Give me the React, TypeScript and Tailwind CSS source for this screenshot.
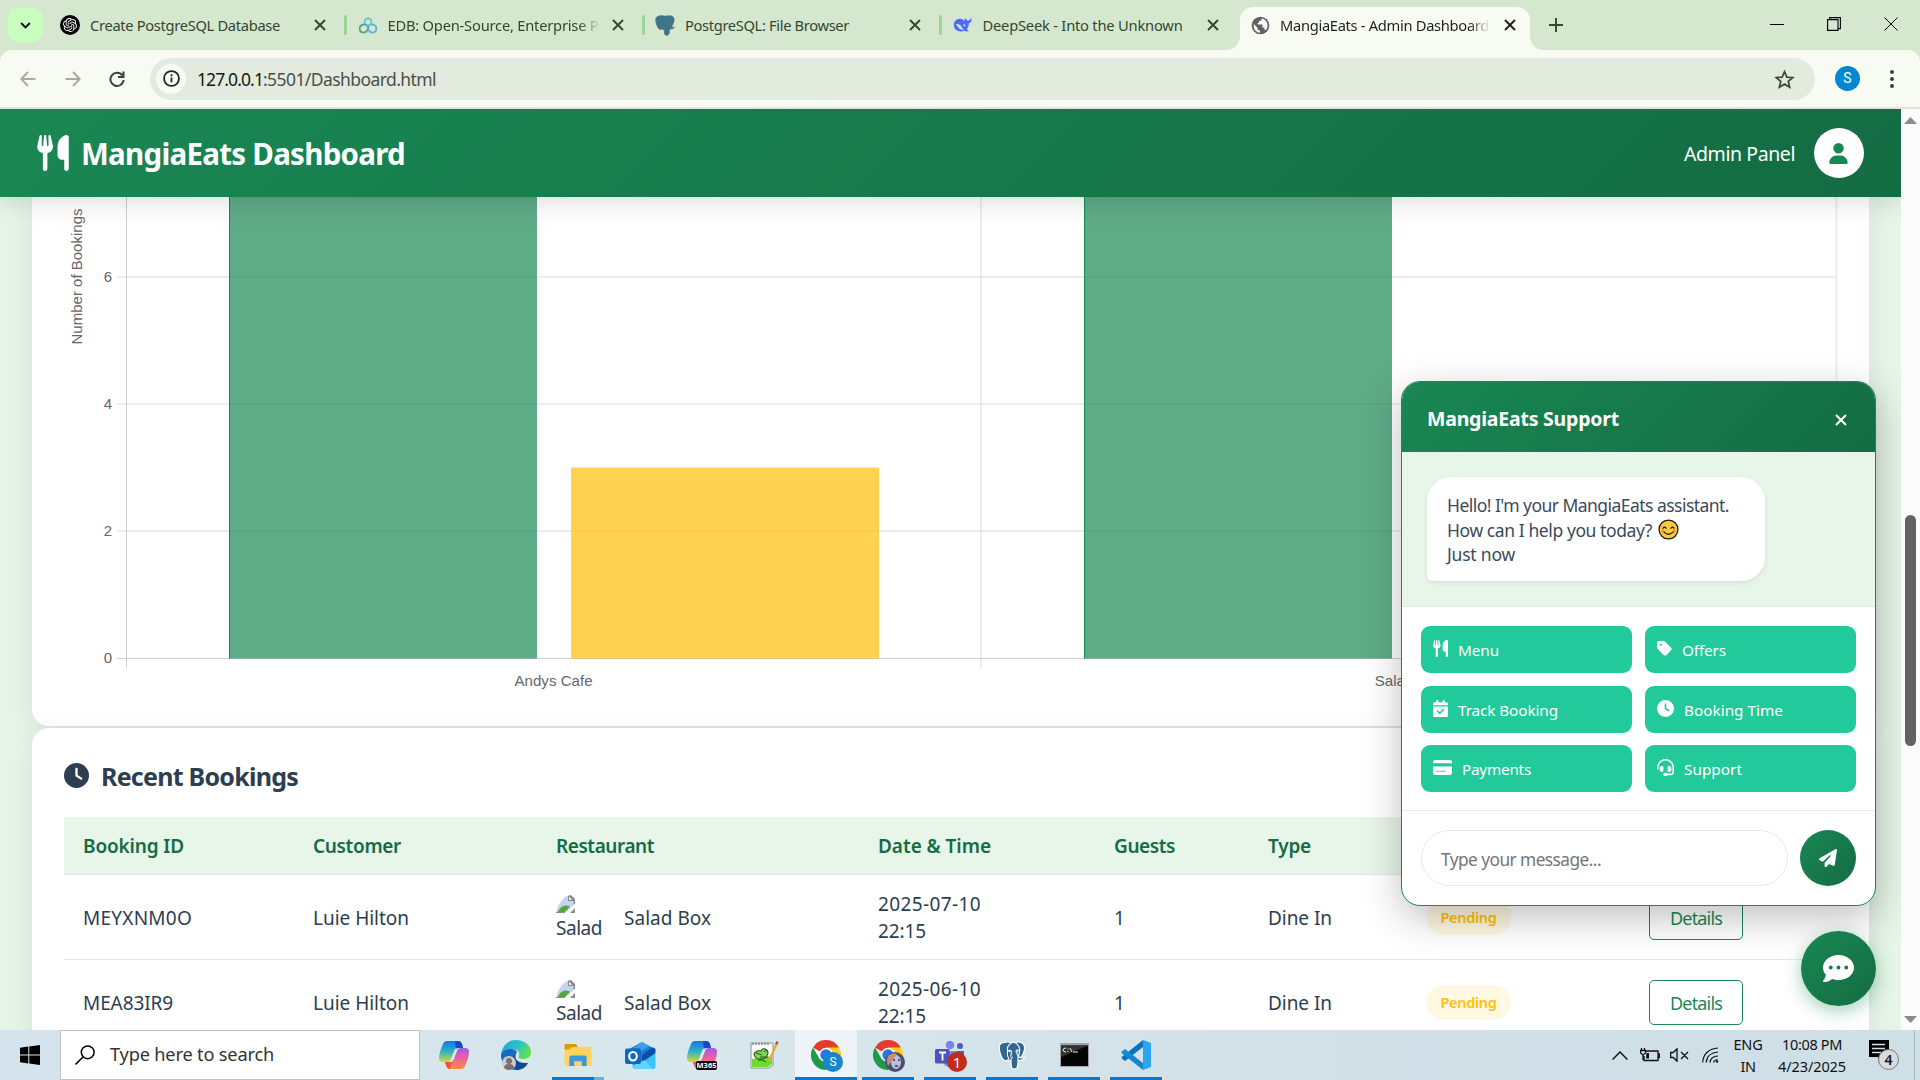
import { useLayoutEffect, useRef, useState, type ReactNode } from "react";
import {
  FaUtensils,
  FaUser,
  FaClock,
  FaTag,
  FaCalendarCheck,
  FaCreditCard,
  FaHeadset,
  FaPaperPlane,
  FaCommentDots,
} from "react-icons/fa6";
import { SiOpenai } from "react-icons/si";

/** Single-line text whose tracking is adjusted so that it spans `w` pixels. */
function Fit({ w, className = "", children }: { w: number; className?: string; children: string }) {
  const ref = useRef<HTMLSpanElement>(null);
  const [spacing, setSpacing] = useState(0);
  useLayoutEffect(() => {
    const natural = ref.current!.getBoundingClientRect().width;
    setSpacing((w - natural) / Math.max(1, children.length));
  }, [w, children]);
  return (
    <span
      ref={ref}
      className={"inline-block justify-self-start whitespace-nowrap " + className}
      style={{ letterSpacing: spacing + "px" }}
    >
      {children}
    </span>
  );
}

/* ---------- browser chrome ---------- */

function Cross({ className = "" }: { className?: string }) {
  return (
    <svg viewBox="0 0 12 12" className={"h-3 w-3 shrink-0 " + className} fill="none" stroke="currentColor" strokeWidth="1.9">
      <path d="M1 1l10 10M11 1L1 11" />
    </svg>
  );
}

function EdbIcon() {
  return (
    <svg viewBox="0 0 20 18" className="h-[17px] w-5" fill="none" strokeWidth="1.8">
      <circle cx="10" cy="5" r="3.6" stroke="#6cc5c5" />
      <path d="M8 8.6C6 7.2 1.2 8 1.2 12.2c0 5.400 6.600 5.400 8.400 1.200l1.400-3.400" stroke="#4f9f98" />
      <path d="M12 8.600c2-1.400 6.800-.6 6.800 3.600 0 5.400-6.600 5.400-8.400 1.200L8.600 9" stroke="#5aaee0" />
    </svg>
  );
}

function Elephant({ className = "", fill = "#336791", outline = "#ffffff" }: { className?: string; fill?: string; outline?: string }) {
  return (
    <svg viewBox="0 0 30 32" className={className}>
      <path
        d="M7 1.500c3-1 5-.5 7 .5 1.500-.7 3-.7 4.500-.3C23 0 28 1.500 28.800 6c.4 4-2 9.500-4.300 12.500 1.600.5 3.300.2 4.500 0-.8 2.200-4 3.300-7.300 2.800-.2 3 .1 6-1.200 8.200-1.200 1.800-4.500 1.800-5.700 0-1-2-.8-5-1-8-1.500.6-3 .5-4-.3l-2 .9C3.500 20.500.5 11 1 6c.3-3 3-4.300 6-4.500z"
        fill={fill}
        stroke={outline}
        strokeWidth="1.300"
      />
      <g fill="none" stroke={outline} strokeWidth="1.200" strokeLinecap="round">
        <path d="M14 2.500c-3.500 2-4.500 4.500-4 8 .3 3-.8 5 .8 7.500 1 1.500 1 2.500-1 3.200" />
        <path d="M10 11.500c1.500-1.500 3.800-1.500 4.300 0 .5 2-.5 4-.8 5.500" />
        <path d="M18.500 2c3.500 2 5 5.500 5 8.500 0 2.500-1.300 4-1 6.500.1.800.5 1.200 2 1.500M23 10.500c-1.500-1-3.500-.8-3.600.6 0 2 2.500 4 2.300 6.500l-.2 3.500" />
        <path d="M13.800 21c0-1.500.4-2.500 1.700-3" />
      </g>
      <circle cx="12.300" cy="11.500" r=".8" fill={outline} />
      <circle cx="21.200" cy="11.200" r=".8" fill={outline} />
    </svg>
  );
}

function WhaleIcon() {
  return (
    <svg viewBox="0 0 24 20" className="h-[18px] w-[21px]" fill="#4d6bfe">
      <path d="M1 10C1 5 4.500 2.500 8.500 2.500c2.500 0 3.500 1 4.500 2.500 1-.3 1.500-1.500 1.200-3.500 1.300.8 2.300 1.800 2.800 3 2 .2 3.500-.5 4.500-3 1.700 3 .5 5.500-2.500 6.500 0 3-1 5.500-2.500 7l2.500 2.200c-2 .8-4 .5-5-.3C7 19.500 1 16 1 10z" />
      <path d="M3.500 9c3-1 6 1 7.500 4.500.5 1 1.500 1.800 2.500 2-3 .8-5-.5-6.500-2-1.200-1.500-2-2.500-3.500-4.500zM12 9.500c1-1 3 0 3 2-1 .5-2 0-3-2z" fill="#d5e7cf" />
    </svg>
  );
}

function GlobeIcon() {
  return (
    <svg viewBox="0 0 20 20" className="h-[19px] w-[19px]">
      <circle cx="10" cy="10" r="9.300" fill="#5f6368" />
      <path d="M3 8.500l4 4v2l2.500 1v2.200C5 17.200 2 13.500 3 8.500zM12 2.500c-1 .2-1 1.500-1.200 2.500H8.500v2H7v2h5v3h2v2.500h2c3-4 1.500-10-4-12z" fill="#f8fbf2" />
    </svg>
  );
}

const tabs: { title: string; w: number; clip: boolean; icon: ReactNode }[] = [
  {
    title: "Create PostgreSQL Database",
    w: 190,
    clip: false,
    icon: (
      <span className="flex h-5 w-5 items-center justify-center rounded-full bg-black">
        <SiOpenai color="#fff" size={14} />
      </span>
    ),
  },
  { title: "EDB: Open-Source, Enterprise P", w: 211, clip: true, icon: <EdbIcon /> },
  { title: "PostgreSQL: File Browser", w: 164, clip: false, icon: <Elephant className="h-[21px] w-5" fill="#35788a" outline="#5d6f7a" /> },
  { title: "DeepSeek - Into the Unknown", w: 200, clip: false, icon: <WhaleIcon /> },
];

function TabStrip() {
  return (
    <div className="flex h-[50px] shrink-0 bg-[#d5e7cf] pl-2 text-[#32472f]">
      <div className="mt-2 flex h-[34px] w-[35px] shrink-0 items-center justify-center rounded-[10px] bg-[#c8ffc0]">
        <svg viewBox="0 0 12 8" className="h-[7px] w-[11px]" fill="none" stroke="#111" strokeWidth="2.2">
          <path d="M1 1.200l5 5 5-5" />
        </svg>
      </div>
      <div className="flex w-[1197px] shrink-0 pl-[3px]">
        {tabs.map((t, i) => (
          <div key={t.title} className="flex h-[50px] w-[297.500px] shrink-0 items-center pl-[14px]">
            <div className="flex w-5 shrink-0 items-center justify-center">{t.icon}</div>
            <div
              className={
                "ml-[10px] w-[212px] shrink-0 overflow-hidden pt-px text-[14.700px] " +
                (t.clip ? "[mask-image:linear-gradient(to_right,black_90%,transparent)]" : "")
              }
            >
              <Fit w={t.w}>{t.title}</Fit>
            </div>
            <Cross className="ml-[12px]" />
            {i < 3 && <div className="ml-[18px] h-5 w-[3px] shrink-0 rounded bg-[#98d692]" />}
          </div>
        ))}
      </div>
      <div className="relative mt-[7px] flex h-[43px] w-[290px] shrink-0 items-center rounded-t-[13px] bg-[#f8fbf2] pb-[7px] pl-[11px] text-[#1b2419]">
        <svg viewBox="0 0 14 14" className="absolute -left-[14px] bottom-0 h-[14px] w-[14px]" fill="#f8fbf2">
          <path d="M14 0v14H0C8 14 14 8 14 0z" />
        </svg>
        <svg viewBox="0 0 14 14" className="absolute -right-[14px] bottom-0 h-[14px] w-[14px]" fill="#f8fbf2">
          <path d="M0 0v14h14C6 14 0 8 0 0z" />
        </svg>
        <GlobeIcon />
        <div className="ml-[10px] w-[210px] shrink-0 overflow-hidden pt-px text-[14.700px] [mask-image:linear-gradient(to_right,black_90%,transparent)]">
          <Fit w={209}>MangiaEats - Admin Dashboard</Fit>
        </div>
        <Cross className="ml-[14px]" />
      </div>
      <svg viewBox="0 0 14 14" className="ml-[19px] mt-[18px] h-[14px] w-[14px]" fill="none" stroke="#32472f" strokeWidth="1.9">
        <path d="M7 0v14M0 7h14" />
      </svg>
      <div className="ml-auto flex h-[50px] items-center gap-[43px] pb-[2px] pr-[22px] text-black">
        <div className="h-px w-[14px] bg-black" />
        <svg viewBox="0 0 14 14" className="h-[14px] w-[14px]" fill="none" stroke="#000" strokeWidth="1.100">
          <path d="M.6 2.600h10.400v10.800H.6zM2.600 2.600V.6h10.800v11h-2.400" />
        </svg>
        <svg viewBox="0 0 14 14" className="h-[14px] w-[14px]" fill="none" stroke="#000" strokeWidth="1">
          <path d="M.5.5l13 13M13.500.5l-13 13" />
        </svg>
      </div>
    </div>
  );
}

function Toolbar() {
  return (
    <div className="flex h-[59px] shrink-0 bg-[#d5e7cf]">
      <div className="flex h-full w-full items-center rounded-t-[12px] border-b-2 border-[#dfe5da] bg-[#f8fbf2] pl-[20px]">
        <svg viewBox="0 0 16 16" className="h-4 w-4" fill="none" stroke="#a6aca2" strokeWidth="1.900">
          <path d="M15.500 8H1.500M8 1L1.300 8 8 15" />
        </svg>
        <svg viewBox="0 0 16 16" className="ml-[29px] h-4 w-4" fill="none" stroke="#a6aca2" strokeWidth="1.900">
          <path d="M.5 8h14M8 1l6.700 7L8 15" />
        </svg>
        <svg viewBox="0 0 16 16" className="ml-[28px] h-4 w-4" fill="none" stroke="#32472f" strokeWidth="2">
          <path d="M13.400 4.500A6.600 6.600 0 1 0 14.600 9M14.500 .5v5.500H9" />
        </svg>
        <div className="ml-[25px] flex h-[42px] w-[1665px] shrink-0 items-center rounded-full bg-[#e3ebdf] pl-[6px] pr-[20px]">
          <div className="flex h-[30px] w-[30px] items-center justify-center rounded-full bg-[#f8fbf2]">
            <svg viewBox="0 0 18 18" className="h-[17px] w-[17px]" fill="none" stroke="#1f2a1d" strokeWidth="1.900">
              <circle cx="9" cy="9" r="7.900" />
              <path d="M9 8v5M9 4.600v1.900" />
            </svg>
          </div>
          <div className="ml-[11px] pt-px text-[17.500px] text-[#4a4f48]">
            <Fit w={66} className="text-[#16190f]">127.0.0.1</Fit>
            <Fit w={173}>:5501/Dashboard.html</Fit>
          </div>
          <svg viewBox="0 0 24 24" className="ml-auto mt-[2px] h-[21px] w-[21px]" fill="none" stroke="#3f4a3d" strokeWidth="2">
            <path d="M12 3l2.700 6.200 6.700.6-5.100 4.400 1.600 6.600-5.900-3.500-5.900 3.500 1.600-6.600-5.100-4.400 6.700-.6z" />
          </svg>
        </div>
        <div className="ml-[20px] flex h-[25px] w-[25px] items-center justify-center rounded-full bg-[#0288d1] font-[Roboto] text-[14px] text-white">S</div>
        <div className="ml-[30px] flex flex-col gap-[3px]">
          <i className="h-[4px] w-[4px] rounded-full bg-[#32472f]" />
          <i className="h-[4px] w-[4px] rounded-full bg-[#32472f]" />
          <i className="h-[4px] w-[4px] rounded-full bg-[#32472f]" />
        </div>
      </div>
    </div>
  );
}

/* ---------- dashboard ---------- */

function Header() {
  return (
    <header className="relative z-10 flex h-[88px] shrink-0 items-center bg-linear-135 from-[#198754] to-[#146c43] pl-[37px] pr-[37px] text-white shadow-[0_4px_25px_rgba(0,0,0,0.15)]">
      <FaUtensils className="h-[36px] w-[32px]" />
      <h1 className="ml-[12px] pt-[2px] text-[29.500px] font-bold">
        <Fit w={324}>MangiaEats Dashboard</Fit>
      </h1>
      <div className="ml-auto flex items-center gap-[19px] text-[19.500px]">
        <Fit w={111} className="pt-[2px]">Admin Panel</Fit>
        <div className="flex h-[50px] w-[50px] items-center justify-center rounded-full bg-white">
          <FaUser className="mr-px h-[21px] w-[19px] text-[#198754]" />
        </div>
      </div>
    </header>
  );
}

const ticks = [
  { v: "6", y: 80 },
  { v: "4", y: 207 },
  { v: "2", y: 334 },
  { v: "0", y: 461.500 },
];

function BookingsChart() {
  return (
    <svg viewBox="0 0 1837 529" className="h-[529px] w-[1837px]" fontFamily="Liberation Sans, Arial, sans-serif" fontSize="15" fill="#666">
      <g stroke="#000" strokeOpacity="0.07" strokeWidth="2">
        {ticks.slice(0, 3).map((t) => (
          <path key={t.v} d={`M85 ${t.y}H1804`} />
        ))}
        <path d="M949 0V471M1804.500 0V471" />
      </g>
      <g stroke="#cfcfcf" strokeWidth="1">
        <path d="M94.500 0V471M85 461.500H1804" />
      </g>
      <rect x="197" y="-2" width="308" height="463.500" fill="#198754" fillOpacity="0.7" />
      <path d="M197.500 0V461.500" stroke="#198754" />
      <rect x="539" y="270.500" width="308" height="191" fill="#ffc107" fillOpacity="0.7" />
      <rect x="1052" y="-2" width="308" height="463.500" fill="#198754" fillOpacity="0.7" />
      <path d="M1052.500 0V461.500" stroke="#198754" />
      {ticks.map((t) => (
        <text key={t.v} x="80" y={Math.floor(t.y) + 5} textAnchor="end">
          {t.v}
        </text>
      ))}
      <text x="521.500" y="489" textAnchor="middle" textLength="78">Andys Cafe</text>
      <text x="1377" y="489" textAnchor="middle">Salad Box</text>
      <text transform="translate(49.500 79.500) rotate(-90)" textAnchor="middle" textLength="136">Number of Bookings</text>
    </svg>
  );
}

function BrokenImage() {
  return (
    <div className="h-[50px] w-[47px] overflow-hidden pt-[3px] leading-[30px]">
      <svg viewBox="0 0 20 18" className="block h-[18px] w-5">
        <path d="M0 18C2 8 8 1 14 0l5 4v5L8 18z" fill="#c3d3f3" />
        <path d="M12 1l3-1 4 4v5h-1.500V6H12z" fill="#8b8b8b" />
        <path d="M13 1.800v3h3z" fill="#fff" />
        <path d="M2 17c2-6 8-8 12-5l-5 5z" fill="#55a834" />
        <path d="M0 17h9v1H0zM14 18l5-5v5z" fill="#8b8b8b" />
      </svg>
      <Fit w={46} className="-mt-[2px]">Salad</Fit>
    </div>
  );
}

const GRID = "grid grid-cols-[230px_243px_322px_236px_154px_158px_223px_207px] items-center pl-[19px] w-[1773px] border-b border-[#e3e6e8]";

const bookings = [
  { id: "MEYXNM0O", idw: 109, date: "2025-07-10" },
  { id: "MEA83IR9", idw: 90, date: "2025-06-10" },
];

function RecentBookings() {
  return (
    <section className="h-[420px] shrink-0 rounded-t-[17px] bg-white px-8 pt-[31px] shadow-[0_8px_30px_rgba(0,0,0,0.08)]">
      <h2 className="flex h-[36px] items-center text-[25px] font-bold text-[#2c3e50]">
        <FaClock className="mb-[4px] h-[25px] w-[25px]" />
        <Fit w={197} className="ml-[12px]">Recent Bookings</Fit>
      </h2>
      <div className="mt-[22px] text-[19px] text-[#2c3e50]">
        <div className={GRID + " h-[58px] bg-[#e8f5e9] pt-[2px] font-semibold text-[#146c43]"}>
          <Fit w={101}>Booking ID</Fit>
          <Fit w={88}>Customer</Fit>
          <Fit w={98}>Restaurant</Fit>
          <Fit w={113}>Date & Time</Fit>
          <Fit w={61}>Guests</Fit>
          <Fit w={43}>Type</Fit>
          <Fit w={60}>Status</Fit>
          <Fit w={70}>Actions</Fit>
        </div>
        {bookings.map((b) => (
          <div key={b.id} className={GRID + " h-[85px]"}>
            <div className="pt-[2px]"><Fit w={b.idw}>{b.id}</Fit></div>
            <div className="pt-[2px]"><Fit w={96}>Luie Hilton</Fit></div>
            <div className="flex items-center">
              <BrokenImage />
              <div className="ml-[21px] pt-[2px]"><Fit w={87}>Salad Box</Fit></div>
            </div>
            <div className="pt-px leading-[27px]">
              <div><Fit w={103}>{b.date}</Fit></div>
              <div><Fit w={48}>22:15</Fit></div>
            </div>
            <div className="pt-[2px]">1</div>
            <div className="pt-[2px]"><Fit w={64}>Dine In</Fit></div>
            <div>
              <div className="flex h-[35px] w-[85px] items-center justify-center rounded-full bg-[#fff8e2] text-[14.500px] font-semibold text-[#ffc107]">
                <Fit w={56} className="pt-px">Pending</Fit>
              </div>
            </div>
            <div>
              <div className="flex h-[45px] w-[94px] items-center justify-center rounded-[5px] border border-[#198754] pt-[2px] text-[18px] text-[#198754]">
                <Fit w={52}>Details</Fit>
              </div>
            </div>
          </div>
        ))}
      </div>
    </section>
  );
}

/* ---------- chat ---------- */

function Smile() {
  return (
    <svg viewBox="0 0 20 20" className="ml-[6px] h-[21px] w-[21px]">
      <circle cx="10" cy="10" r="9" fill="#ffc83d" stroke="#1a1a1a" strokeWidth="1.200" />
      <circle cx="4.600" cy="11.500" r="1.500" fill="#ff8257" />
      <circle cx="15.400" cy="11.500" r="1.500" fill="#ff8257" />
      <path d="M4.800 8.800q1.400-2 2.900 0M12.300 8.800q1.400-2 2.900 0M5.800 12.500q4.200 4 8.400 0" fill="none" stroke="#1a1a1a" strokeWidth="1.200" strokeLinecap="round" />
    </svg>
  );
}

const actions = [
  { label: "Menu", w: 41, icon: <FaUtensils className="h-[17px] w-[15px]" /> },
  { label: "Offers", w: 44, icon: <FaTag className="h-[17px] w-[15px]" /> },
  { label: "Track Booking", w: 100, icon: <FaCalendarCheck className="h-[17px] w-[15px]" /> },
  { label: "Booking Time", w: 99, icon: <FaClock className="h-[17px] w-[17px]" /> },
  { label: "Payments", w: 69, icon: <FaCreditCard className="h-[17px] w-[19px]" /> },
  { label: "Support", w: 58, icon: <FaHeadset className="h-[17px] w-[17px]" /> },
];

function Chat() {
  return (
    <div className="absolute left-[1401px] top-[272px] z-20 flex h-[525px] w-[475px] flex-col overflow-hidden rounded-[19px] border border-[#198754] bg-white shadow-[0_12px_38px_rgba(0,0,0,0.25)]">
      <div className="flex h-[70px] shrink-0 items-center justify-between bg-linear-135 from-[#198754] to-[#146c43] pl-[25px] pr-[28px] text-[19.500px] font-bold text-white">
        <Fit w={192} className="pt-[3px]">MangiaEats Support</Fit>
        <svg viewBox="0 0 12 12" className="mt-[6px] h-3 w-3" fill="none" stroke="#fff" strokeWidth="2">
          <path d="M1 1l10 10M11 1L1 11" />
        </svg>
      </div>
      <div className="h-[155px] shrink-0 border-b border-[#e3e8e6] bg-[#e8f5e9] pl-[25px] pt-[25px]">
        <div className="h-[104px] w-[338px] rounded-[24px] rounded-bl-[6px] bg-white pl-[20px] pt-[16px] text-[17.500px] leading-[24.500px] text-[#3b4a5a] shadow-[0_2px_6px_rgba(0,0,0,0.08)]">
          <div><Fit w={282}>Hello! I'm your MangiaEats assistant.</Fit></div>
          <div className="flex items-center">
            <Fit w={205}>How can I help you today?</Fit>
            <Smile />
          </div>
          <div><Fit w={68}>Just now</Fit></div>
        </div>
      </div>
      <div className="grid h-[204px] shrink-0 grid-cols-[211px_211px] content-start gap-x-[13px] gap-y-[12.500px] border-b border-[#e6e8ea] pl-[19px] pt-[19px]">
        {actions.map((a) => (
          <div key={a.label} className="flex h-[47px] items-center rounded-[9px] bg-[#22c99a] pl-[12px] text-[15.300px] text-white">
            <span className="pb-[2px]">{a.icon}</span>
            <Fit w={a.w} className="ml-[10px] pt-[2px]">{a.label}</Fit>
          </div>
        ))}
      </div>
      <div className="flex flex-1 items-center gap-[12px] pb-px pl-[19px]">
        <div className="flex h-[56px] w-[367px] items-center rounded-full border border-[#e6e8ea] pl-[19px] pt-[4px] text-[17.300px] text-[#757575]">
          <Fit w={160}>Type your message...</Fit>
        </div>
        <div className="flex h-[56px] w-[56px] items-center justify-center rounded-full bg-linear-135 from-[#198754] to-[#146c43] text-white">
          <FaPaperPlane className="h-[18px] w-[18px]" />
        </div>
      </div>
    </div>
  );
}

function Page() {
  return (
    <div className="flex h-[921px] shrink-0">
      <div className="relative flex w-[1901px] shrink-0 flex-col overflow-hidden bg-[#e6f5e7]">
        <Header />
        <div className="flex flex-col gap-[2px] pl-8 pr-8">
          <section className="h-[529px] shrink-0 rounded-b-[17px] bg-white shadow-[0_8px_30px_rgba(0,0,0,0.08)]">
            <BookingsChart />
          </section>
          <RecentBookings />
        </div>
        <Chat />
        <div className="absolute left-[1801px] top-[822px] z-20 flex h-[75px] w-[75px] items-center justify-center rounded-full bg-linear-135 from-[#198754] to-[#146c43] text-white shadow-[0_5px_18px_rgba(25,135,84,0.4)]">
          <FaCommentDots className="h-[31px] w-[31px]" />
        </div>
      </div>
      <div className="flex w-[19px] shrink-0 flex-col items-center bg-[#fcfcfc] pb-[7px] pt-[8px]">
        <svg viewBox="0 0 13 7" className="h-[7px] w-[13px]" fill="#8a8a8a"><path d="M0 7L6.500 0 13 7z" /></svg>
        <div className="mt-[391px] h-[231px] w-[11px] rounded-full bg-[#636363]" />
        <svg viewBox="0 0 13 7" className="mt-auto h-[7px] w-[13px]" fill="#8a8a8a"><path d="M0 0h13L6.500 7z" /></svg>
      </div>
    </div>
  );
}

/* ---------- taskbar ---------- */

function Copilot() {
  return (
    <svg viewBox="0 0 30 28" className="h-[28px] w-[30px]">
      <defs>
        <linearGradient id="cpA" x1="0" y1="0" x2="0" y2="1">
          <stop offset="0" stopColor="#1b74e8" /><stop offset=".5" stopColor="#2bb3c0" /><stop offset="1" stopColor="#d8d83a" />
        </linearGradient>
        <linearGradient id="cpB" x1="0" y1="0" x2="0" y2="1">
          <stop offset="0" stopColor="#a558e8" /><stop offset=".5" stopColor="#f0609c" /><stop offset="1" stopColor="#f7913d" />
        </linearGradient>
      </defs>
      <path d="M8 0h11q3 0 4 3l1 4h-5q-3 0-4 3l-3 8q-1 3-4 3H4q-4 0-4-4Q0 12 4 3 5 0 8 0z" fill="url(#cpA)" />
      <path d="M22 28H11q-3 0-4-4l-1-3h5q3 0 4-3l3-8q1-3 4-3h4q4 0 4 4 0 5-4 14-1 3-4 3z" fill="url(#cpB)" />
      <path d="M16 0h3q3 0 4 3l1 4h-5q-1 0-2 .6z" fill="#1648c8" />
      <path d="M6 21h5q1 0 2-.5L11 28Q8 28 7 24z" fill="#f0553a" />
    </svg>
  );
}

function Edge() {
  return (
    <svg viewBox="0 0 30 30" className="h-[30px] w-[30px]">
      <defs>
        <linearGradient id="edA" x1="0" y1="0" x2="1" y2=".4">
          <stop offset="0" stopColor="#1f9de0" /><stop offset=".6" stopColor="#2cc3c8" /><stop offset="1" stopColor="#5fe04f" />
        </linearGradient>
      </defs>
      <path d="M0 15C1 6 7 0 15 0c9 0 15 6 15 12 0 5-4 7-7 7-4 0-6-1-5-3 1-4-2-7-7-7C6 9 1 12 0 15z" fill="url(#edA)" />
      <path d="M0 15C1 11 5 9 10 9c3 0 5 1 6 3-3 1-5 4-5 8 1 6 8 8 16 3-3 5-7 7-12 7C6 30 0 24 0 15z" fill="#1569c0" />
      <path d="M11 20c0-4 2-7 5-8-4 5-1 12 11 11-3 5-7 7-12 7-3-3-4-6-4-10z" fill="#124a91" />
      <circle cx="8" cy="23" r="7" fill="#cfccc8" />
      <circle cx="8" cy="21" r="3" fill="#77726e" />
      <path d="M3 28q0-4 5-4t5 4q-5 4-10 0z" fill="#77726e" />
    </svg>
  );
}

function Explorer() {
  return (
    <svg viewBox="0 0 28 24" className="h-[23px] w-[28px]">
      <path d="M0 0h12l2 3H8L5 6H0z" fill="#e09a00" />
      <path d="M0 6h5l3-3h20v20H0z" fill="#ffd35c" />
      <path d="M5 23V14q0-2 2-2h14q2 0 2 2v9h-5v-5h-8v5z" fill="#3c97dc" />
    </svg>
  );
}

function Outlook() {
  return (
    <svg viewBox="0 0 31 27" className="h-[27px] w-[31px]">
      <path d="M5 6.500L17 0l13 7v17q0 3-3 3H11q-3 0-3-3z" fill="#1a7fdc" />
      <path d="M17 0l7 4-9 6V6.500H8z" fill="#3f9fe8" />
      <path d="M17 13L27.500 5.300 30.500 7v4L17 20z" fill="#0c4fa6" />
      <path d="M30.500 11v13q0 3-3 3H10q-2 0-3-3h6z" fill="#3cc4f5" />
      <path d="M15 20l5-2 8 9H10q-2 0-3-3z" fill="#62d6fa" />
      <rect y="6.500" width="16" height="15.500" rx="2" fill="#0f68c2" />
      <ellipse cx="8" cy="14.200" rx="3.800" ry="4.200" fill="none" stroke="#fff" strokeWidth="2.200" />
    </svg>
  );
}

function NoteEditor() {
  return (
    <svg viewBox="0 0 29 28" className="h-[28px] w-[29px]">
      <path d="M1 2h22v22l-4 3H1z" fill="#fafafa" stroke="#777" strokeWidth=".8" />
      <path d="M3 2v2M6 2v2M9 2v2M12 2v2M15 2v2M18 2v2" stroke="#555" />
      <path d="M2 18l20-3v8l-4 3H2z" fill="#6edb2f" />
      <path d="M4 13q2-4 7-3 1-3 4-2t3 4q-1 5-6 6-7 1-8-5z" fill="#7cd858" stroke="#264f18" strokeWidth="1.100" />
      <path d="M6 12l6 2M8 19q4-1 8 2M14 11l3-2M10 16h8" stroke="#2d551e" strokeWidth="1" fill="none" />
      <path d="M19 20L26.500 3" stroke="#eaa937" strokeWidth="2.200" />
      <path d="M26.200 3.500l1.300-3" stroke="#c14b44" strokeWidth="2.400" />
    </svg>
  );
}

function Chrome() {
  return (
    <svg viewBox="0 0 30 30" className="h-[30px] w-[30px]">
      <path d="M15 15L2 7.500A15 15 0 0 1 28 7.500z" fill="#e33b2e" />
      <path d="M15 7.500h13A15 15 0 0 1 15 30l6.500-11.300z" fill="#fdd023" />
      <path d="M2 7.500A15 15 0 0 0 15 30l6.500-11.300L8.500 18.700z" fill="#1f9a4d" />
      <circle cx="15" cy="15" r="7.200" fill="#fff" />
      <circle cx="15" cy="15" r="5.700" fill="#2b72e4" />
    </svg>
  );
}

function Teams() {
  return (
    <svg viewBox="0 0 30 28" className="h-[28px] w-[30px]">
      <circle cx="15" cy="4" r="4.300" fill="#7b83eb" />
      <circle cx="25" cy="5" r="3" fill="#5059c9" />
      <path d="M21 10h8v8q-1 4-6 4h-2z" fill="#5059c9" />
      <path d="M8 10h14v10q-1 6-7 6t-7-6z" fill="#7b83eb" />
      <rect y="8" width="14.500" height="14.500" rx="1.500" fill="#4b53bc" />
      <path d="M4 11.500h7M7.500 11.500v8" stroke="#fff" strokeWidth="1.900" />
    </svg>
  );
}

function Terminal() {
  return (
    <svg viewBox="0 0 29 24" className="h-[24px] w-[29px]">
      <rect width="29" height="24" fill="#a3a3a3" />
      <rect x="1" y="2.500" width="27" height="20.500" fill="#050505" />
      <path d="M1 2.500h27L1 14z" fill="#333" />
      <path d="M6 5q-3 0-3 2t3 2M8 5.500v1M8 8v1M10 5l2 4M13 9h5" stroke="#fff" strokeWidth=".9" fill="none" />
    </svg>
  );
}

function VsCode() {
  return (
    <svg viewBox="0 0 30 30" className="h-[30px] w-[30px]">
      <path d="M22 7L4 21l-3-2.300q-1-1 0-2L22 0z" fill="#0b73ba" />
      <path d="M22 23L4 9l-3 2.300q-1 1 0 2L22 30z" fill="#1588d0" />
      <path d="M22 0l8 3v24l-8 3z" fill="#2aa5ee" />
    </svg>
  );
}

function BadgedChrome({ children }: { children: ReactNode }) {
  return (
    <div className="relative">
      <Chrome />
      {children}
    </div>
  );
}

const apps: { name: string; state: "none" | "open" | "multi" | "active"; icon: ReactNode }[] = [
  { name: "copilot", state: "none", icon: <Copilot /> },
  { name: "edge", state: "none", icon: <Edge /> },
  { name: "explorer", state: "multi", icon: <Explorer /> },
  { name: "outlook", state: "none", icon: <Outlook /> },
  {
    name: "m365",
    state: "none",
    icon: (
      <div className="relative">
        <Copilot />
        <span className="absolute -bottom-px right-0 flex h-[9px] w-[21px] items-center justify-center rounded-[2px] bg-black text-[7.500px] font-bold leading-none text-white">M365</span>
      </div>
    ),
  },
  { name: "notes", state: "none", icon: <NoteEditor /> },
  {
    name: "chrome",
    state: "active",
    icon: (
      <BadgedChrome>
        <span className="absolute -bottom-[2px] -right-[2px] flex h-5 w-5 items-center justify-center rounded-full bg-[#1787cd] font-[Roboto] text-[12px] text-white">S</span>
      </BadgedChrome>
    ),
  },
  {
    name: "chrome-2",
    state: "open",
    icon: (
      <BadgedChrome>
        <svg viewBox="0 0 20 20" className="absolute -bottom-[2px] -right-[2px] h-5 w-5">
          <circle cx="10" cy="10" r="10" fill="#4a506e" />
          <ellipse cx="11" cy="10" rx="5" ry="7" fill="#b9bfdc" />
          <path d="M3 4q4-4 9-2l-6 8-3 4q-2-5 0-10z" fill="#c78d74" />
          <path d="M8 8h2M13 8h2M10 14h3" stroke="#333a63" strokeWidth="1.300" />
        </svg>
      </BadgedChrome>
    ),
  },
  {
    name: "teams",
    state: "open",
    icon: (
      <div className="relative">
        <Teams />
        <span className="absolute -bottom-[3px] -right-[2px] flex h-5 w-5 items-center justify-center rounded-full bg-[#c42b1c] text-[15px] text-white">1</span>
      </div>
    ),
  },
  { name: "postgres", state: "open", icon: <Elephant className="h-[29px] w-[28px]" /> },
  { name: "terminal", state: "open", icon: <Terminal /> },
  { name: "code", state: "open", icon: <VsCode /> },
];

function Taskbar() {
  return (
    <div className="flex h-[50px] shrink-0 bg-[linear-gradient(90deg,#d5e3ec,#d8e8ec_35%,#d2e0e8_65%,#cfdfe6)] text-[#111]">
      <div className="flex w-[60px] items-center justify-center">
        <svg viewBox="0 0 20 20" className="h-5 w-5" fill="#000">
          <path d="M0 2.800l8.300-1.200v8H0zM9.300 1.400L20 0v9.600H9.300zM0 10.500h8.300v8L0 17.300zM9.300 10.500H20V20L9.300 18.600z" />
        </svg>
      </div>
      <div className="flex w-[360px] items-center border border-[#bfc3c6] bg-white pl-[14px]">
        <svg viewBox="0 0 20 20" className="h-5 w-5" fill="none" stroke="#000" strokeWidth="1.500">
          <circle cx="12.700" cy="7.300" r="6.400" />
          <path d="M8 12L.6 19.400" />
        </svg>
        <Fit w={164} className="ml-[15px] text-[18.200px] text-[#333]">Type here to search</Fit>
      </div>
      <div className="ml-[3px] flex">
        {apps.map((a) => (
          <div
            key={a.name}
            className={"relative flex h-[50px] w-[62px] items-center justify-center " + (a.state === "active" ? "bg-[#edf3f7]" : "")}
          >
            {a.icon}
            {a.state === "active" && <i className="absolute inset-x-0 bottom-0 h-[3px] bg-[#0078d7]" />}
            {a.state === "open" && <i className="absolute inset-x-[5px] bottom-0 h-[3px] bg-[#0078d7]" />}
            {a.state === "multi" && <i className="absolute inset-x-[5px] bottom-0 h-[3px] border-r-[10px] border-[#6aaee4] bg-[#0078d7]" />}
          </div>
        ))}
      </div>
      <div className="ml-auto flex items-center text-[14.500px]">
        <svg viewBox="0 0 16 9" className="h-[9px] w-[16px]" fill="none" stroke="#111" strokeWidth="1.400"><path d="M.6 8.400L8 1l7.400 7.400" /></svg>
        <svg viewBox="0 0 20 14" className="ml-[12px] h-[14px] w-[20px]" fill="none" stroke="#111" strokeWidth="1.300">
          <path d="M6 3h12v9.500H4V8M18.500 6h1v3.500h-1M1.500 0v2.500M4.500 0v2.500M.6 2.500h5V5L3 7 .6 5zM3 7v5" />
          <path d="M6.500 5H9v5.500H6z" fill="#111" stroke="none" />
        </svg>
        <svg viewBox="0 0 19 14" className="ml-[10px] h-[14px] w-[19px]" fill="none" stroke="#111" strokeWidth="1.300">
          <path d="M.7 4.500h2.600L7 .8v12.400L3.300 9.500H.7zM11 4l7 7M18 4l-7 7" />
        </svg>
        <svg viewBox="0 0 17 16" className="ml-[13px] h-[16px] w-[17px]" fill="none" stroke="#111" strokeWidth="1.200">
          <path d="M.7 15.500C1 7 7 1.500 16 1M4.200 15.500C4.500 9.500 9 5.500 16 5M8 15.500c.3-3.500 3-6.200 8-6.500M11.500 15.500q.5-2.500 4-3" />
          <circle cx="15" cy="14.500" r="1.200" fill="#111" stroke="none" />
        </svg>
        <div className="ml-[14px] flex w-[30px] flex-col items-center leading-[22px]">
          <Fit w={29}>ENG</Fit>
          <Fit w={15}>IN</Fit>
        </div>
        <div className="ml-[14px] flex w-[70px] flex-col items-center leading-[22px]">
          <Fit w={60}>10:08 PM</Fit>
          <Fit w={68}>4/23/2025</Fit>
        </div>
        <div className="relative ml-[22px] h-[30px] w-[30px]">
          <svg viewBox="0 0 20 20" className="h-5 w-5" fill="#000">
            <path d="M0 0h20v17h-8l-3 3v-3H0z" />
            <path d="M3 4.500h13M3 8.500h13M3 12.500h9" stroke="#d2e0e8" strokeWidth="1.400" />
          </svg>
          <span className="absolute bottom-0 right-0 flex h-[21px] w-[21px] items-center justify-center rounded-full border border-[#777] bg-[#d9dcde] text-[14px] font-semibold">4</span>
        </div>
        <div className="ml-[15px] h-[50px] w-[6px] border-l border-[#a9b5bc]" />
      </div>
    </div>
  );
}

export default function App() {
  return (
    <div className="flex h-[1080px] w-[1920px] flex-col overflow-hidden bg-white font-['Noto_Sans','Open_Sans',sans-serif] leading-normal">
      <TabStrip />
      <Toolbar />
      <Page />
      <Taskbar />
    </div>
  );
}
